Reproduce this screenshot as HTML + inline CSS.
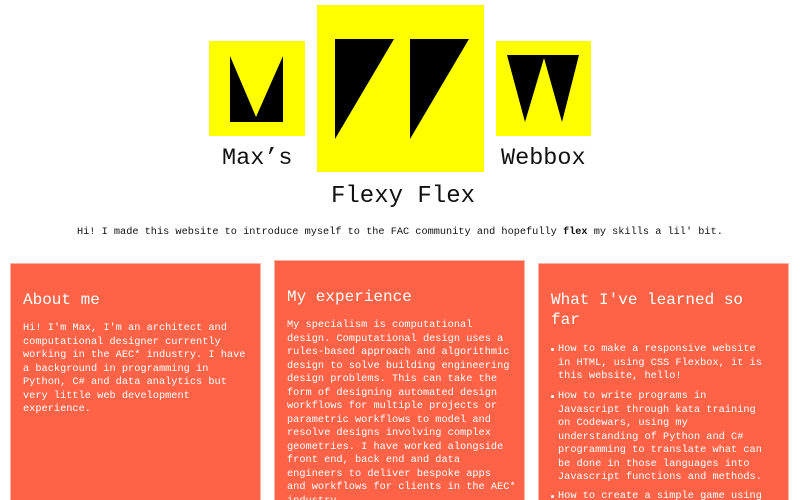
<!DOCTYPE html>
<html style="width:800px;height:500px;overflow:hidden"><head><meta charset="utf-8"><style>
*{margin:0;padding:0;box-sizing:border-box}
body{width:800px;height:500px;overflow:hidden;background:#fff;font-family:"Liberation Mono",monospace;position:relative}
.y{position:absolute;background:#ffff00}
.t{position:absolute;color:#111;white-space:nowrap}
.card{position:absolute;background:#ff6347;border:1px solid #f9b3a5;border-bottom:none;color:#fff;width:251px;height:245px}
.card h2{position:absolute;left:12px;font-weight:normal;font-size:16px;line-height:20px;white-space:nowrap}
.card p{position:absolute;left:12px;font-size:10.3px;line-height:13.5px;white-space:pre}
.li{position:absolute;left:19px;font-size:10.3px;line-height:13.5px;white-space:pre}
.li:before{content:"";position:absolute;left:-7px;top:5px;width:3px;height:3px;border-radius:50%;background:#fff}
</style></head><body>
<div class="y" style="left:209px;top:41px;width:96px;height:95px"></div>
<div class="y" style="left:317px;top:5px;width:167px;height:167px"></div>
<div class="y" style="left:496px;top:41px;width:95px;height:95px"></div>
<svg width="800" height="180" style="position:absolute;left:0;top:0">
<polygon points="230,56 256,117 283,56 283,122 230,122" fill="#000"/>
<polygon points="335,39 394,39 335,139" fill="#000"/>
<polygon points="410,39 469,39 410,139" fill="#000"/>
<polygon points="507,55 579,55 562,122 544,58 525,122" fill="#000"/>
</svg>
<div class="t" style="left:222px;top:145px;font-size:23.5px">Max’s</div>
<div class="t" style="left:501px;top:145px;font-size:23.5px">Webbox</div>
<div class="t" style="left:331px;top:183px;font-size:24px">Flexy Flex</div>
<div class="t" style="left:77px;top:226px;font-size:10.25px">Hi! I made this website to introduce myself to the FAC community and hopefully <b>flex</b> my skills a lil' bit.</div>

<div class="card" style="left:10px;top:263px">
<h2 style="top:26px">About me</h2>
<p style="top:58px">Hi! I'm Max, I'm an architect and
computational designer currently
working in the AEC* industry. I have
a background in programming in
Python, C# and data analytics but
very little web development
experience.</p>
</div>
<div class="card" style="left:274px;top:260px;height:245px">
<h2 style="top:26px">My experience</h2>
<p style="top:58px">My specialism is computational
design. Computational design uses a
rules-based approach and algorithmic
design to solve building engineering
design problems. This can take the
form of designing automated design
workflows for multiple projects or
parametric workflows to model and
resolve designs involving complex
geometries. I have worked alongside
front end, back end and data
engineers to deliver bespoke apps
and workflows for clients in the AEC*
industry.</p>
</div>
<div class="card" style="left:538px;top:263px">
<h2 style="top:26px">What I've learned so<br>far</h2>
<div class="li" style="top:79px">How to make a responsive website
in HTML, using CSS Flexbox, it is
this website, hello!</div>
<div class="li" style="top:126px">How to write programs in
Javascript through kata training
on Codewars, using my
understanding of Python and C#
programming to translate what can
be done in those languages into
Javascript functions and methods.</div>
<div class="li" style="top:226px">How to create a simple game using</div>
</div>
</body></html>
